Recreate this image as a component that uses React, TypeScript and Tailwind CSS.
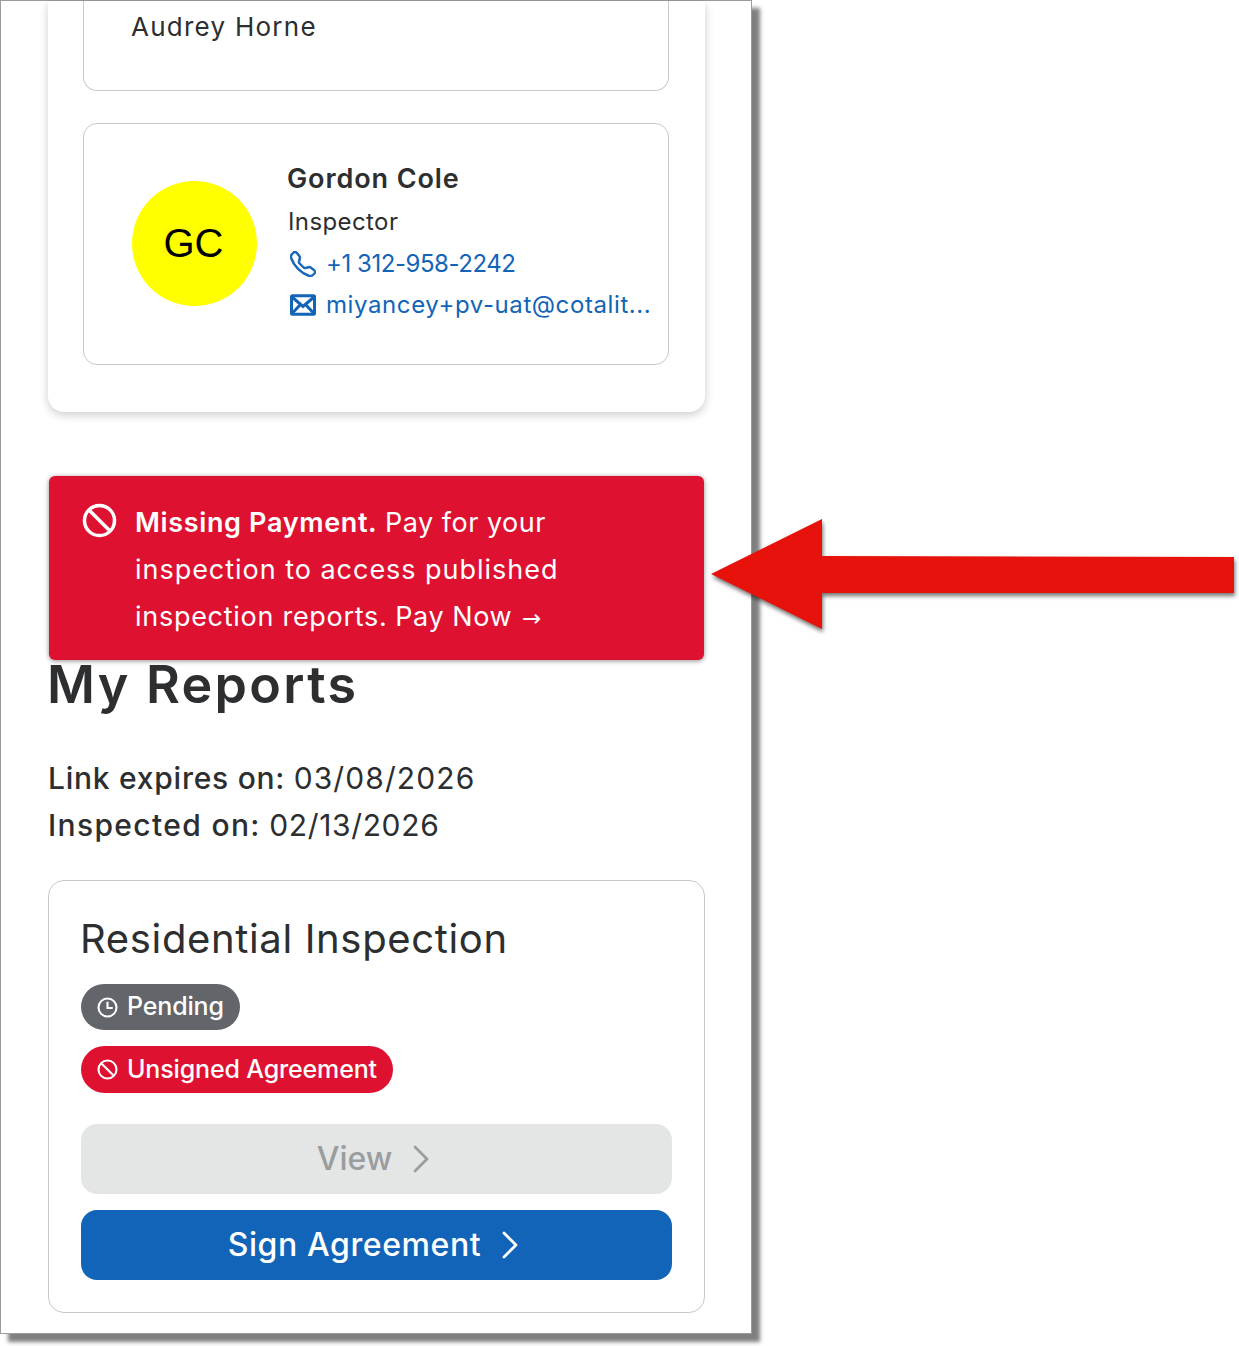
import { ChevronRight } from "lucide-react";
import { BsTelephone } from "react-icons/bs";

function BanIcon({ className }: { className: string }) {
  return (
    <svg viewBox="0 0 24 24" fill="none" stroke="currentColor" strokeWidth="2.4" className={className}>
      <circle cx="12" cy="12" r="10.3" />
      <path d="M4.8 4.8l14.4 14.4" />
    </svg>
  );
}

function ClockIcon({ className }: { className: string }) {
  return (
    <svg viewBox="0 0 24 24" fill="none" stroke="currentColor" strokeWidth="2.4" className={className}>
      <circle cx="12" cy="12" r="10.3" />
      <path d="M12 5.5V12.5H18" />
    </svg>
  );
}

function MailIcon({ className }: { className: string }) {
  return (
    <svg viewBox="0 0 26 22" fill="none" stroke="currentColor" strokeWidth="3" className={className}>
      <rect x="1.5" y="1.7" width="23" height="18.6" rx="1" />
      <path d="M2 3l11 9.5L24 3M2 19.5l8.5-9M24 19.5l-8.5-9" />
    </svg>
  );
}

function Arrow() {
  return (
    <svg
      viewBox="0 0 540 130"
      className="absolute left-[705px] top-[510px] w-[540px] h-[130px] drop-shadow-[1px_3px_2px_rgba(0,0,0,0.55)]"
    >
      <polygon points="6,64 117,9 117,46 529,47 529,83 117,83 117,119" fill="#e8120c" />
    </svg>
  );
}

export default function App() {
  return (
    <div className="relative w-[1239px] h-[1346px] bg-white overflow-hidden font-['Inter',sans-serif] text-[#2c2e30]">
      <div className="w-[752px] h-[1334px] bg-white border border-[#9b9b9b] shadow-[8px_8px_4px_rgba(0,0,0,0.5)] pl-[47px] pr-[46px]">
        {/* Contacts card */}
        <div className="w-[657px] h-[411px] bg-white rounded-b-[16px] shadow-[0_3px_10px_rgba(0,0,0,0.2)] pl-[35px] pr-[36px] pb-[47px] flex flex-col gap-[32px]">
          <div className="h-[90px] shrink-0 border border-t-0 border-[#c8c8c8] rounded-b-[14px] pl-[47px] pt-[8px] text-[26px] leading-[36px] tracking-[1.25px]">
            Audrey Horne
          </div>
          <div className="h-[242px] shrink-0 border border-[#c8c8c8] rounded-[14px] pl-[48px] flex items-center gap-[31px]">
            <div className="w-[125px] h-[125px] -mt-[2px] pr-[2px] shrink-0 rounded-full bg-[#ffff00] flex items-center justify-center font-['Liberation_Sans',sans-serif] text-[40px] text-black">
              GC
            </div>
            <div className="min-w-0 flex flex-col -mt-[7px]">
              <div className="-ml-px text-[27px] leading-[38px] font-semibold tracking-[0.9px]">Gordon Cole</div>
              <div className="mt-[7px] text-[24px] leading-[34px] tracking-[0.4px]">Inspector</div>
              <div className="mt-[8px] flex items-center gap-[10px] text-[#1264b8] text-[24px] leading-[34px]">
                <BsTelephone className="ml-[2px] w-[26px] h-[26px] shrink-0" stroke="currentColor" strokeWidth={0.5} />
                <span className="tracking-[-0.45px]">+1 312-958-2242</span>
              </div>
              <div className="mt-[7px] flex items-center gap-[10px] text-[#1264b8] text-[24px] leading-[34px]">
                <MailIcon className="ml-[2px] w-[26px] h-[22px] shrink-0" />
                <span className="whitespace-nowrap tracking-[0.6px]">miyancey+pv-uat@cotalit...</span>
              </div>
            </div>
          </div>
        </div>

        {/* Alert */}
        <div className="mt-[64px] w-[655px] ml-px h-[184px] bg-[#de1131] rounded-[6px] shadow-[0_1px_5px_rgba(0,0,0,0.45)] pl-[33px] pt-[23px] flex gap-[18px] text-white">
          <BanIcon className="w-[35px] h-[35px] shrink-0 mt-[4px]" />
          <p className="text-[27px] leading-[47px] whitespace-nowrap">
            <span className="font-semibold tracking-[0.65px]">Missing Payment.</span>{" "}
            <span className="tracking-[0.5px]">Pay for your</span>
            <br />
            <span className="tracking-[0.97px]">inspection to access published</span>
            <br />
            <span className="tracking-[0.72px]">inspection reports.</span>{" "}
            <span className="tracking-[0.6px]">Pay Now</span>{" "}
            <span className="ml-[2px] font-['DejaVu_Sans',sans-serif] text-[23px]">→</span>
          </p>
        </div>

        {/* Reports */}
        <h1 className="-ml-px text-[52px] leading-[50px] font-semibold tracking-[2.3px]">My Reports</h1>
        <div className="mt-[45px] text-[30px] leading-[47px]">
          <div>
            <span className="font-medium tracking-[0.75px]">Link expires on:</span>{" "}
            <span className="tracking-[1.1px]">03/08/2026</span>
          </div>
          <div>
            <span className="font-medium tracking-[1.35px]">Inspected on:</span>{" "}
            <span className="tracking-[0.65px]">02/13/2026</span>
          </div>
        </div>

        <div className="mt-[31px] w-[657px] h-[433px] border border-[#c8c8c8] rounded-[16px] px-[32px] pt-[32px]">
          <h2 className="-ml-px text-[40px] leading-[52px] tracking-[0.65px]">Residential Inspection</h2>
          <div className="mt-[19px] flex flex-col items-start gap-[16px] text-white text-[25px] font-medium">
            <span className="h-[46px] rounded-full bg-[#62666a] pl-[16px] pr-[16px] flex items-center gap-[9px]">
              <ClockIcon className="w-[21px] h-[21px]" />
              <span className="tracking-[-0.15px]">Pending</span>
            </span>
            <span className="h-[47px] rounded-full bg-[#de1131] pl-[16px] pr-[16px] flex items-center gap-[9px]">
              <BanIcon className="w-[21px] h-[21px]" />
              <span className="tracking-[-0.15px]">Unsigned Agreement</span>
            </span>
          </div>
          <div className="mt-[31px] w-[591px] flex flex-col gap-[16px] text-[32px] font-medium">
            <div className="h-[70px] pl-[9px] rounded-[16px] bg-[#e4e6e6] text-[#9a9d9f] flex items-center justify-center gap-[5px]">
              <span className="tracking-[0px]">View</span>
              <ChevronRight className="w-[48px] h-[48px]" strokeWidth={1.4} />
            </div>
            <div className="h-[70px] pl-[9px] rounded-[16px] bg-[#1264b8] text-white flex items-center justify-center gap-[5px]">
              <span className="tracking-[0.6px]">Sign Agreement</span>
              <ChevronRight className="w-[48px] h-[48px]" strokeWidth={1.4} />
            </div>
          </div>
        </div>
      </div>
      <Arrow />
    </div>
  );
}
